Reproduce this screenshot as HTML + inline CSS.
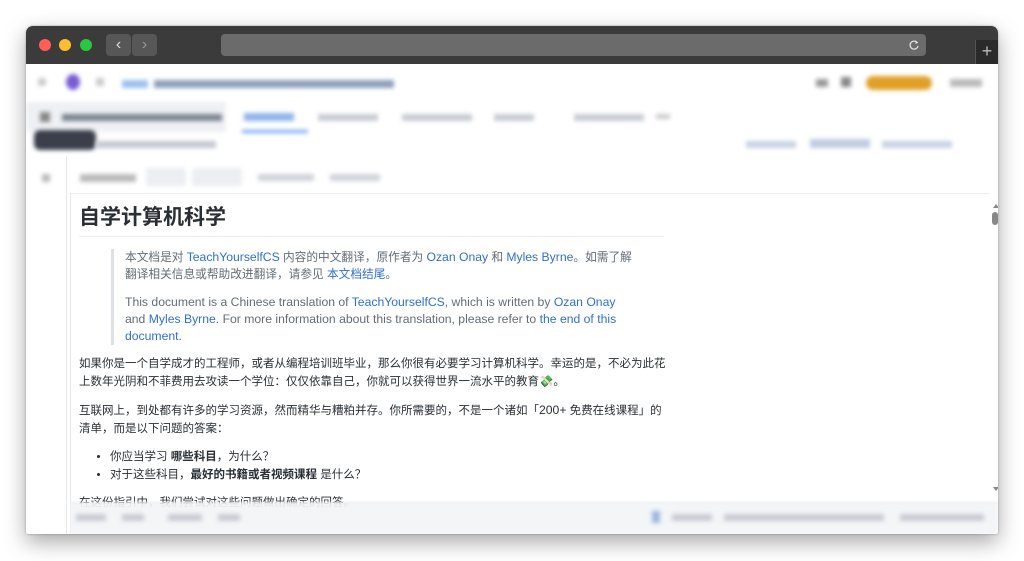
<!DOCTYPE html>
<html><head><meta charset="utf-8"><style>
*{margin:0;padding:0;box-sizing:border-box}
body{width:1024px;height:561px;background:#fff;position:relative;overflow:hidden;font-family:"Liberation Sans","Noto Sans CJK SC",sans-serif}
.win{position:absolute;left:26px;top:26px;width:972px;height:508px;border-radius:7px 7px 2px 2px;overflow:hidden;box-shadow:0 8px 22px rgba(0,0,0,.35),0 0 2px rgba(0,0,0,.3);background:#fff}
.tb{position:absolute;left:0;top:0;width:972px;height:38px;background:#3b3b3b}
.dot{position:absolute;top:13px;width:12px;height:12px;border-radius:50%}
.nb{position:absolute;top:8px;width:25px;height:22px;background:#575757;border-radius:4px;color:#ddd;font-size:16px;text-align:center;line-height:21px}
.url{position:absolute;left:195px;top:8px;width:705px;height:22px;background:#6b6b6b;border-radius:4px}
.plus{position:absolute;left:949px;top:14px;width:23px;height:24px;background:#2a2a2a;color:#bbb;font-size:18px;text-align:center;line-height:23px;border-left:1px solid #555}
.bl{filter:blur(2px);position:absolute}
.content{position:absolute;left:44px;top:167px;width:920px;height:341px;border-top:1px solid #eceef1;border-left:1px solid #e6e8eb}
.md{position:absolute;left:8px;top:10px;width:700px;color:#2a2f35;font-size:11.5px;line-height:17.5px;white-space:nowrap}
h1{font-size:21px;line-height:28px;padding-bottom:4px;border-bottom:1px solid #eaecef;margin-bottom:12px;width:585px}
.bq{margin-left:32px;border-left:3px solid #dde1e6;padding-left:11px;color:#636c76;margin-bottom:11px;line-height:17px}
.bq p{margin-bottom:11px}
a{color:#2f6fd0;text-decoration:none}
p{margin-bottom:11px}
ul{margin-left:31px;margin-bottom:11px}
.foot{position:absolute;left:44px;top:476px;width:928px;height:32px;background:rgba(243,244,246,.93);filter:blur(1px);border-top:1px solid #e5e7eb}
</style></head><body>
<div class="win">
 <div class="tb">
  <div class="dot" style="left:13px;background:#fe5f57"></div>
  <div class="dot" style="left:33px;background:#febc2e"></div>
  <div class="dot" style="left:54px;background:#28c840"></div>
  <div class="nb" style="left:80px">‹</div>
  <div class="nb" style="left:106px;color:#999">›</div>
  <div class="url"><svg style="position:absolute;right:6px;top:5px" width="12" height="12" viewBox="0 0 12 12"><path d="M9.5 4A4 4 0 1 0 10 7" fill="none" stroke="#ddd" stroke-width="1.3"/><path d="M7.5 1.5L10 3.8 7.5 5z" fill="#ddd"/></svg></div>
  <div class="plus">+</div>
 </div>
 <div class="bl" style="left:12px;top:52px;width:8px;height:8px;background:#ccc;border-radius:2px"></div>
 <div class="bl" style="left:40px;top:48px;width:14px;height:16px;background:#7a5cd6;border-radius:50%"></div>
 <div class="bl" style="left:70px;top:52px;width:8px;height:8px;background:#ccc"></div>
 <div class="bl" style="left:96px;top:54px;width:26px;height:8px;background:#9cc1f0"></div>
 <div class="bl" style="left:128px;top:54px;width:240px;height:8px;background:#8da0bb"></div>
 <div class="bl" style="left:790px;top:53px;width:12px;height:8px;background:#999"></div>
 <div class="bl" style="left:815px;top:51px;width:10px;height:10px;background:#888"></div>
 <div class="bl" style="left:840px;top:50px;width:66px;height:14px;background:#e0a028;border-radius:7px"></div>
 <div class="bl" style="left:924px;top:53px;width:32px;height:8px;background:#bbb"></div>
 <div class="bl" style="left:0;top:76px;width:200px;height:30px;background:#eef0f4"></div>
 <div class="bl" style="left:14px;top:86px;width:10px;height:10px;background:#888"></div>
 <div class="bl" style="left:36px;top:88px;width:160px;height:7px;background:#7b8490"></div>
 <div class="bl" style="left:218px;top:87px;width:50px;height:8px;background:#8fb4ec"></div>
 <div class="bl" style="left:216px;top:104px;width:66px;height:3px;background:#6fa2ee"></div>
 <div class="bl" style="left:292px;top:88px;width:60px;height:7px;background:#c8ccd2"></div>
 <div class="bl" style="left:376px;top:88px;width:70px;height:7px;background:#c8ccd2"></div>
 <div class="bl" style="left:468px;top:88px;width:40px;height:7px;background:#c8ccd2"></div>
 <div class="bl" style="left:548px;top:88px;width:70px;height:7px;background:#c8ccd2"></div>
 <div class="bl" style="left:630px;top:88px;width:14px;height:5px;background:#ccc"></div>
 <div class="bl" style="left:8px;top:104px;width:62px;height:20px;background:#3a3f4a;border-radius:6px"></div>
 <div class="bl" style="left:70px;top:115px;width:120px;height:7px;background:#c4c8ce"></div>
 <div class="bl" style="left:720px;top:115px;width:50px;height:7px;background:#c8d2e2"></div>
 <div class="bl" style="left:784px;top:113px;width:60px;height:9px;background:#c0cde4"></div>
 <div class="bl" style="left:856px;top:115px;width:70px;height:7px;background:#c8d2e2"></div>
 <div class="bl" style="left:16px;top:148px;width:8px;height:8px;background:#bbb"></div>
 <div class="bl" style="left:54px;top:148px;width:56px;height:8px;background:#bbb"></div>
 <div class="bl" style="left:120px;top:142px;width:40px;height:18px;background:#eceef1;border-radius:3px"></div>
 <div class="bl" style="left:166px;top:142px;width:50px;height:18px;background:#eceef1;border-radius:3px"></div>
 <div class="bl" style="left:232px;top:148px;width:56px;height:7px;background:#d0d3d8"></div>
 <div class="bl" style="left:304px;top:148px;width:50px;height:7px;background:#d0d3d8"></div>
 <div style="position:absolute;left:40px;top:130px;width:1px;height:378px;background:#e6e8eb"></div>
 <div class="content">
  <div class="md">
   <h1>自学计算机科学</h1>
   <div class="bq">
    <p style="font-size:11.7px">本文档是对 <a style="font-size:12.2px">TeachYourselfCS</a> 内容的中文翻译，原作者为 <a style="font-size:12.2px">Ozan Onay</a> 和 <a style="font-size:12.2px">Myles Byrne</a>。如需了解<br>翻译相关信息或帮助改进翻译，请参见 <a>本文档结尾</a>。</p>
    <p style="margin-bottom:0;font-size:12.2px">This document is a Chinese translation of <a>TeachYourselfCS</a>, which is written by <a>Ozan Onay</a><br>and <a>Myles Byrne</a>. For more information about this translation, please refer to <a>the end of this</a><br><a>document</a>.</p>
   </div>
   <p>如果你是一个自学成才的工程师，或者从编程培训班毕业，那么你很有必要学习计算机科学。幸运的是，不必为此花<br>上数年光阴和不菲费用去攻读一个学位：仅仅依靠自己，你就可以获得世界一流水平的教育<span style="color:#3a9a5a">💸</span>。</p>
   <p>互联网上，到处都有许多的学习资源，然而精华与糟粕并存。你所需要的，不是一个诸如「<span style="font-size:12.2px">200+</span> 免费在线课程」的<br>清单，而是以下问题的答案：</p>
   <ul><li>你应当学习 <b>哪些科目</b>，为什么？</li><li>对于这些科目，<b>最好的书籍或者视频课程</b> 是什么？</li></ul>
   <p>在这份指引中，我们尝试对这些问题做出确定的回答。</p>
  </div>
  <div style="position:absolute;left:922px;top:10px;width:0;height:0;border-left:3px solid transparent;border-right:3px solid transparent;border-bottom:4px solid #888"></div>
  <div style="position:absolute;left:921px;top:18px;width:6px;height:13px;background:#888;border-radius:3px"></div>
  <div style="position:absolute;left:922px;top:293px;width:0;height:0;border-left:3px solid transparent;border-right:3px solid transparent;border-top:4px solid #888"></div>
 </div>
 <div class="foot"></div>
 <div class="bl" style="left:50px;top:488px;width:30px;height:7px;background:#c8ccd2"></div>
 <div class="bl" style="left:96px;top:488px;width:22px;height:7px;background:#c8ccd2"></div>
 <div class="bl" style="left:142px;top:488px;width:34px;height:7px;background:#c8ccd2"></div>
 <div class="bl" style="left:192px;top:488px;width:22px;height:7px;background:#c8ccd2"></div>
 <div class="bl" style="left:626px;top:485px;width:8px;height:12px;background:#9ab8e0"></div>
 <div class="bl" style="left:646px;top:488px;width:40px;height:7px;background:#c8ccd2"></div>
 <div class="bl" style="left:698px;top:488px;width:160px;height:7px;background:#c8ccd2"></div>
 <div class="bl" style="left:874px;top:488px;width:84px;height:7px;background:#c8ccd2"></div>
</div>
</body></html>
